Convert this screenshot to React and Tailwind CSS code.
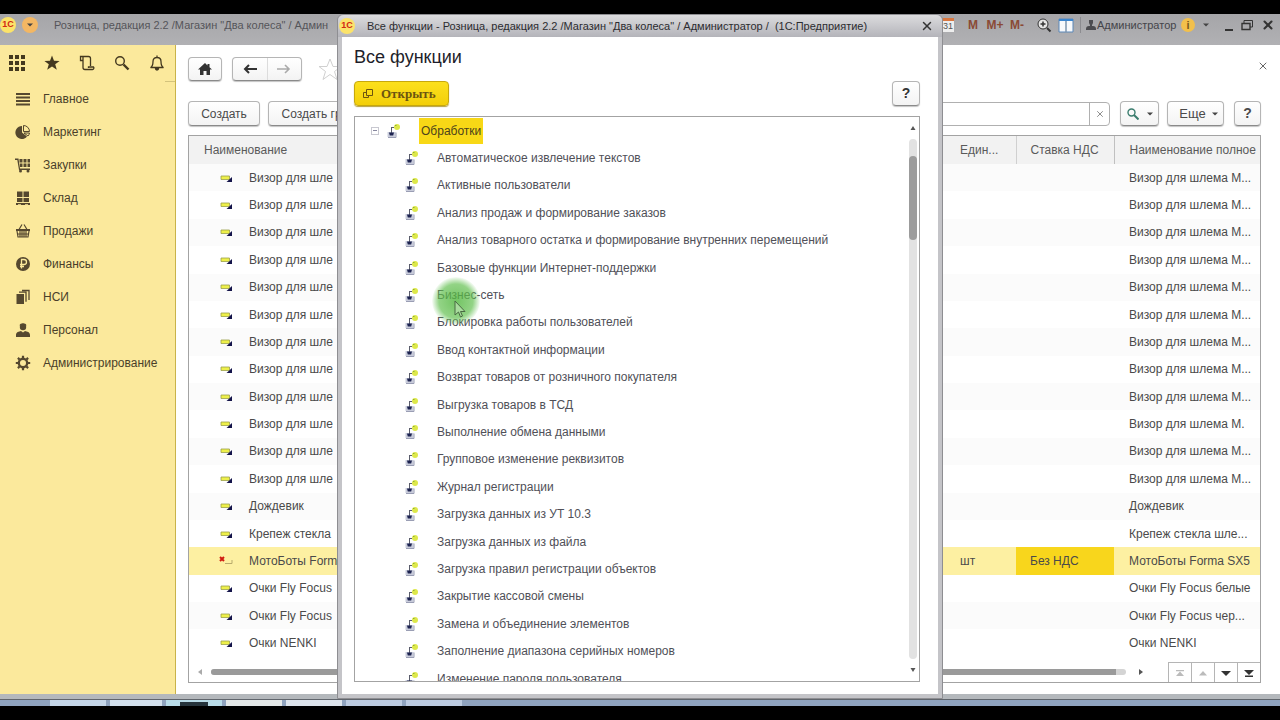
import React, { useState } from 'react';
import { X } from 'lucide-react';

const sections = [
  { id: 'main', label: 'Главное' },
  { id: 'marketing', label: 'Маркетинг' },
  { id: 'purchases', label: 'Закупки' },
  { id: 'stock', label: 'Склад' },
  { id: 'sales', label: 'Продажи' },
  { id: 'finance', label: 'Финансы' },
  { id: 'nsi', label: 'НСИ' },
  { id: 'staff', label: 'Персонал' },
  { id: 'admin', label: 'Администрирование' },
];

const visor = { name: 'Визор для шле', fullName: 'Визор для шлема M...' };
const visorShort = { name: 'Визор для шле', fullName: 'Визор для шлема M.' };

const goods = [
  visor, visor, visor, visor, visor, visor, visor, visor, visor, visorShort, visor, visor,
  { name: 'Дождевик', fullName: 'Дождевик' },
  { name: 'Крепеж стекла', fullName: 'Крепеж стекла шле...' },
  { name: 'МотоБоты Forma SX5', unit: 'шт', vat: 'Без НДС', fullName: 'МотоБоты Forma SX5', marked: true },
  { name: 'Очки Fly Focus', fullName: 'Очки Fly Focus белые' },
  { name: 'Очки Fly Focus', fullName: 'Очки Fly Focus чер...' },
  { name: 'Очки NENKI', fullName: 'Очки NENKI' },
];

const functions = [
  'Автоматическое извлечение текстов',
  'Активные пользователи',
  'Анализ продаж и формирование заказов',
  'Анализ товарного остатка и формирование внутренних перемещений',
  'Базовые функции Интернет-поддержки',
  'Бизнес-сеть',
  'Блокировка работы пользователей',
  'Ввод контактной информации',
  'Возврат товаров от розничного покупателя',
  'Выгрузка товаров в ТСД',
  'Выполнение обмена данными',
  'Групповое изменение реквизитов',
  'Журнал регистрации',
  'Загрузка данных из УТ 10.3',
  'Загрузка данных из файла',
  'Загрузка правил регистрации объектов',
  'Закрытие кассовой смены',
  'Замена и объединение элементов',
  'Заполнение диапазона серийных номеров',
  'Изменение пароля пользователя',
];

const buttonBase =
  'flex items-center justify-center rounded-sm border border-[#b5b5b5] border-b-[#8a8a8a] bg-gradient-to-b from-white to-[#f3f3f3] shadow-[0_1px_1px_#c4c4c4]';

function SectionIcon({ id }) {
  return (
    <svg viewBox="0 0 16 16" className="h-4 w-4 shrink-0" fill="#55482f" aria-hidden="true">
      {id === 'main' && <path d="M1 2h14v2H1zM1 5.500h14v2H1zM1 9h14v2H1zM1 12.500h14v2H1z" />}
      {id === 'marketing' && (
        <>
          <path d="M7 2a6.500 6.500 0 1 0 5 10.500L7 8.500z" />
          <path d="M8.500 1.500v6h6a6 6 0 0 0-6-6zM9 9h5.500a6 6 0 0 1-1.500 3z" fill="none" stroke="#55482f" />
        </>
      )}
      {id === 'purchases' && (
        <>
          <path d="M0 1.500h3.500L5 11.500h10V13H4L2.300 3H0z" />
          <path d="M4.500 2h3v3.500h-3zM8.500 2h3v3.500h-3zM12.500 2H15v3.500h-2.500zM5 6.500h2.500V10H5zM8.500 6.500h3V10h-3zM12.500 6.500H15V10h-2.500z" />
          <circle cx="5.500" cy="14" r="1.500" />
          <circle cx="13" cy="14" r="1.500" />
        </>
      )}
      {id === 'stock' && <path d="M2 1.500h5.500V7H2zM8.500 1.500H14V7H8.500zM2 8h5.500v4H2zM8.500 8H14v4H8.500zM1 13h14v2h-2v-.8h-3V15H6v-.8H3V15H1z" />}
      {id === 'sales' && (
        <>
          <path d="M1 6h14v2H1z" />
          <path d="M4 6.500 7 1.500M12 6.500 9 1.500M2 8l1 6h10l1-6M5 8v6M7 8v6M9 8v6M11 8v6M3 11h10" fill="none" stroke="#55482f" strokeWidth="1.200" />
        </>
      )}
      {id === 'finance' && (
        <>
          <circle cx="8" cy="8" r="7" />
          <path d="M6.500 12.500v-9H9a2.500 2.500 0 0 1 0 5H5M5 10.500h4" fill="none" stroke="#fbe99c" strokeWidth="1.300" />
        </>
      )}
      {id === 'nsi' && (
        <>
          <path d="M1.500 5h7.500v10H1.500z" />
          <path d="M4 3.200h7v9.500M7 1.500h7v9.500" fill="none" stroke="#55482f" strokeWidth="1.300" />
        </>
      )}
      {id === 'staff' && (
        <>
          <circle cx="8" cy="5" r="3.200" />
          <path d="M4.500 3.500C5 .5 11 .5 11.500 3.500zM1 15v-2c0-3 3-3.500 5-4l2 1.500L10 9c2 .5 5 1 5 4v2z" />
        </>
      )}
      {id === 'admin' && (
        <>
          <circle cx="8" cy="8" r="4.200" fill="none" stroke="#55482f" strokeWidth="2.400" />
          <path d="M8 .8V3M8 13v2.200M.8 8H3M13 8h2.200M2.900 2.900l1.600 1.600M11.500 11.500l1.600 1.600M2.900 13.100l1.600-1.600M11.500 4.500l1.600-1.600" stroke="#55482f" strokeWidth="2.200" />
        </>
      )}
    </svg>
  );
}

function Logo() {
  return (
    <span className="flex h-4 w-4 shrink-0 items-center justify-center rounded-full bg-[#fbe36a] text-[9px] font-bold text-[#d22a12]">
      1С
    </span>
  );
}

function Caret({ className = '' }) {
  return (
    <svg viewBox="0 0 6 4" className={`h-1 w-1.5 shrink-0 ${className}`} fill="#444" aria-hidden="true">
      <path d="M0 .5h6L3 3.500z" />
    </svg>
  );
}

function GoodsIcon({ marked }) {
  return (
    <svg viewBox="0 0 14 10" className="block h-[10px] w-[14px]" aria-hidden="true">
      {marked ? (
        <>
          <path d="M6 7.500h7V4" fill="none" stroke="#b8ab6c" />
          <path d="m1 1 4 4M5 1 1 5" stroke="#d01c10" strokeWidth="2" />
        </>
      ) : (
        <>
          <path d="M2 3h8.500v3.500H2z" fill="#eef04a" stroke="#9aa04a" strokeWidth=".8" />
          <path d="M13 4v5H7.500z" fill="#14144a" />
        </>
      )}
    </svg>
  );
}

function ProcessingIcon() {
  return (
    <svg viewBox="0 0 16 16" className="h-4 w-4 shrink-0" aria-hidden="true">
      <path d="M2.500 9h8v5h-8z" fill="#c9ccdb" />
      <path d="M6.500 4v7M6.500 4.500H9" fill="none" stroke="#5a5d6c" />
      <path d="M3 14.500h8V9.500" fill="none" stroke="#9a9eb4" />
      <path d="M4 9.500h5l-.8 3H4.800z" fill="#1d2350" />
      <circle cx="12" cy="4" r="3" fill="#dde84a" />
      <path d="M10 2.500h1.500" stroke="#8fae3a" />
    </svg>
  );
}

function TitleBar() {
  return (
    <header className="flex h-[31px] shrink-0 items-start justify-between bg-gradient-to-b from-[#a5a5a8] to-[#b1b1b4] pt-px text-[11px] text-[#55555a]">
      <div className="flex h-5 items-center">
        <Logo />
        <button type="button" aria-label="Меню" className="ml-1.5 flex h-4 w-4 items-center justify-center rounded-full bg-[#f3b763]">
          <Caret />
        </button>
        <span className="ml-4 whitespace-nowrap">Розница, редакция 2.2 /Магазин "Два колеса" / Админ</span>
      </div>
      <div className="flex h-5 items-center pr-[5px]">
        <span className="mr-2 flex h-3.5 w-3 items-center justify-center border-t-[3px] border-[#d9773f] bg-[#eee] text-[9px] text-[#555]">31</span>
        <button type="button" className="w-[22px] text-[12px] font-bold text-[#8a4a35]">M</button>
        <button type="button" className="w-[22px] text-[12px] font-bold text-[#8a4a35]">M+</button>
        <button type="button" className="w-[22px] text-[12px] font-bold text-[#8a4a35]">M-</button>
        <button type="button" aria-label="Масштаб" className="ml-2">
          <svg viewBox="0 0 16 16" className="h-4 w-4" fill="none" stroke="#333">
            <circle cx="7" cy="7" r="5" fill="#e6e6e6" />
            <path d="M4.500 7h5M7 4.500v5" strokeWidth="1.500" />
            <path d="m11 11 3.500 3.500" strokeWidth="2" />
          </svg>
        </button>
        <button type="button" aria-label="Панели" className="ml-1.5">
          <svg viewBox="0 0 16 16" className="h-4 w-4">
            <path d="M1 2h14v13H1z" fill="#f7f9fb" stroke="#5b87b8" />
            <path d="M1 2h14v2H1z" fill="#3b86cf" />
            <path d="M8 4v11" stroke="#7b93ad" strokeWidth="1.500" />
          </svg>
        </button>
        <span className="ml-1.5 h-4 w-px bg-[#8c8c90]" />
        <svg viewBox="0 0 12 12" className="ml-1 h-3 w-3" fill="#4c4c50" aria-hidden="true">
          <path d="M4 1h4v3L7 6v1h1c2 0 3 1 3 3v1H1v-1c0-2 1-3 3-3h1V6L4 4z" />
        </svg>
        <button type="button" className="w-20 text-left text-[#44444a]">Администратор</button>
        <button type="button" aria-label="Информация" className="ml-1 flex h-3.5 w-3.5 items-center justify-center rounded-full bg-[#f2c04c] text-[11px] font-bold text-[#7a5a1c]">i</button>
        <Caret className="ml-2" />
        <button type="button" aria-label="Свернуть" className="ml-4 flex h-3 w-2 items-end">
          <span className="h-0.5 w-2 bg-[#333]" />
        </button>
        <button type="button" aria-label="Развернуть" className="ml-2">
          <svg viewBox="0 0 12 12" className="h-3 w-3" fill="none" stroke="#333">
            <path d="M3 4V1.500h8.500V8H9" />
            <path d="M1 4.500h8v6H1z" strokeWidth="1.400" />
          </svg>
        </button>
        <button type="button" aria-label="Закрыть" className="ml-2">
          <X className="h-3.5 w-3.5 text-[#333]" strokeWidth={3.500} />
        </button>
      </div>
    </header>
  );
}

function Sidebar() {
  return (
    <aside className="w-[176px] shrink-0 border-r border-[#c9b34a] bg-[#fbe99c] text-[12px] text-[#4a3f2a]">
      <div className="flex h-9 items-center gap-[19px] pl-[9px]">
        <button type="button" aria-label="Меню функций">
          <svg viewBox="0 0 16 16" className="h-4 w-4" fill="#44391f">
            <path d="M0 0h4v4H0zM6 0h4v4H6zM12 0h4v4h-4zM0 6h4v4H0zM6 6h4v4H6zM12 6h4v4h-4zM0 12h4v4H0zM6 12h4v4H6zM12 12h4v4h-4z" />
          </svg>
        </button>
        <button type="button" aria-label="Избранное">
          <svg viewBox="0 0 16 16" className="h-4 w-4" fill="#44391f">
            <path d="m8 .5 2 5.200 5.600.2-4.400 3.400 1.600 5.400L8 11.600l-4.800 3.100 1.600-5.400L.4 5.900 6 5.700z" />
          </svg>
        </button>
        <button type="button" aria-label="История">
          <svg viewBox="0 0 16 16" className="h-4 w-4" fill="none" stroke="#44391f" strokeWidth="1.300">
            <path d="M4 5.500H1.500V1.500h8a2 2 0 0 1 2 2V11M4 1.500v11a2 2 0 0 0 2 2h7.500a1.500 1.500 0 0 0 1-2.500H9.500v1" />
          </svg>
        </button>
        <button type="button" aria-label="Поиск">
          <svg viewBox="0 0 16 16" className="h-4 w-4" fill="none" stroke="#44391f">
            <circle cx="6" cy="6" r="4.300" strokeWidth="1.400" />
            <path d="m9.500 9.500 5 5" strokeWidth="2.400" />
          </svg>
        </button>
        <button type="button" aria-label="Оповещения">
          <svg viewBox="0 0 16 16" className="h-4 w-4" fill="none" stroke="#44391f" strokeWidth="1.300">
            <path d="M1.500 12.500c2-1 2.500-3 2.500-6 0-2.500 1.500-4 4-4s4 1.500 4 4c0 3 .5 5 2.500 6zM8 .5v2" />
            <path d="M6.500 13.500a1.500 1.500 0 0 0 3 0z" fill="#44391f" />
          </svg>
        </button>
      </div>
      <div className="ml-auto h-px w-2.5 bg-[#d3c37c]" />
      <nav>
        {sections.map((section) => (
          <a key={section.id} href={`#${section.id}`} className="flex h-[33px] items-center gap-3 pl-[15px]">
            <SectionIcon id={section.id} />
            {section.label}
          </a>
        ))}
      </nav>
    </aside>
  );
}

function GoodsTable() {
  return (
    <div className="flex min-h-0 flex-1 flex-col border border-[#a3a3a3]">
      <div className="min-h-0 flex-1">
        <table className="h-full w-full table-fixed border-collapse text-left">
          <thead>
            <tr className="h-7 bg-[#f2f2f2] text-[#5a5a5a]">
              <th className="pl-[15px] font-normal">Наименование</th>
              <th className="w-[72px] border-r border-[#d0d0d0] pl-4 font-normal">Един...</th>
              <th className="w-[98px] border-r border-[#c0c0c0] pl-3.5 font-normal">Ставка НДС</th>
              <th className="w-[146px] whitespace-nowrap pl-[15px] font-normal">Наименование полное</th>
            </tr>
          </thead>
          <tbody>
            {goods.map((item, index) => (
              <tr key={index} className={item.marked ? 'bg-[#fdf0a2]' : 'odd:bg-[#fbfbfb]'}>
                <td className="p-0">
                  <div className="flex items-center pl-[30px]">
                    <GoodsIcon marked={item.marked} />
                    <span className="ml-4 whitespace-nowrap">{item.name}</span>
                  </div>
                </td>
                <td className="p-0 pl-4">{item.unit}</td>
                <td className={item.vat ? 'bg-[#f8d61c] p-0 pl-3.5' : 'p-0 pl-3.5'}>{item.vat}</td>
                <td className="whitespace-nowrap p-0 pl-[15px]">{item.fullName}</td>
              </tr>
            ))}
          </tbody>
        </table>
      </div>
      <div className="flex h-[25px] shrink-0 items-end">
        <div className="flex h-5 flex-1 items-center">
          <svg viewBox="0 0 6 8" className="ml-2 h-2 w-1.5" fill="#aaa" aria-hidden="true"><path d="M5 1v6L1 4z" /></svg>
          <div className="ml-2 mr-3 flex h-1.5 flex-1 rounded-full bg-[#d4d4d4] pr-2.5">
            <div className="flex-1 rounded-l-full bg-[#9a9a9a]" />
          </div>
          <svg viewBox="0 0 6 8" className="mr-6 h-2 w-1.5" fill="#555" aria-hidden="true"><path d="M1 1v6l4-3z" /></svg>
        </div>
        <div className="flex h-5 border-t border-[#b5b5b5]">
          {['first', 'up', 'down', 'last'].map((kind) => (
            <button key={kind} type="button" aria-label={kind} className="flex w-[23px] items-center justify-center border-l border-[#b5b5b5]">
              <svg viewBox="0 0 10 10" className="h-2.5 w-2.5" fill={kind === 'down' || kind === 'last' ? '#333' : '#bbb'}>
                {kind === 'first' && <path d="M1 2h8v1.200H1zM5 3.500 9 8H1z" />}
                {kind === 'up' && <path d="m5 3 4 4.500H1z" />}
                {kind === 'down' && <path d="M0 3h10L5 8z" />}
                {kind === 'last' && <path d="M0 2h10L5 7zM1 7.500h8V9H1z" />}
              </svg>
            </button>
          ))}
        </div>
      </div>
    </div>
  );
}

function GoodsPage() {
  const [query, setQuery] = useState('');

  return (
    <main className="flex min-w-0 flex-1 flex-col bg-white pb-[11px] pl-3 pr-[19px] text-[12px] text-[#4a4a4a]">
      <div className="mt-3 flex h-6 items-center">
        <button type="button" aria-label="Начальная страница" className={`${buttonBase} h-6 w-[34px]`}>
          <svg viewBox="0 0 14 12" className="h-3 w-3.5" fill="#333">
            <path d="M7 0 0 6.500h2V12h3.500V8h3v4H12V6.500h2l-2.500-2.300V1h-2v1.400z" />
          </svg>
        </button>
        <div className={`${buttonBase} ml-2.5 h-6 w-[70px]`}>
          <button type="button" aria-label="Назад" className="flex h-full flex-1 items-center justify-center border-r border-[#dcdcdc]">
            <svg viewBox="0 0 14 10" className="h-2.5 w-3.5" fill="none" stroke="#333" strokeWidth="2"><path d="M14 5H2M6 1 2 5l4 4" /></svg>
          </button>
          <button type="button" aria-label="Вперед" className="flex h-full flex-1 items-center justify-center">
            <svg viewBox="0 0 14 10" className="h-2.5 w-3.5" fill="none" stroke="#aaa" strokeWidth="1.600"><path d="M0 5h12M8 1l4 4-4 4" /></svg>
          </button>
        </div>
        <svg viewBox="0 0 24 24" className="ml-4 h-6 w-6" fill="none" stroke="#d0d0d0" aria-hidden="true">
          <path d="m12 2 3 7.500h8l-6.500 5 2.500 8-7-5-7 5 2.500-8L1 9.500h8z" />
        </svg>
        <button type="button" aria-label="Закрыть" className="-mr-2 mb-1.5 ml-auto">
          <X className="h-3 w-3 text-[#666]" />
        </button>
      </div>
      <div className="mb-[9px] mt-5 flex h-[25px] items-center">
        <button type="button" className={`${buttonBase} h-[25px] w-[72px]`}>Создать</button>
        <button type="button" className={`${buttonBase} ml-2 h-[25px] w-28`}>Создать группу</button>
        <div className="ml-auto flex h-6 w-[260px] rounded-sm border border-[#b0b0b0]">
          <input aria-label="Поиск" value={query} onChange={(e) => setQuery(e.target.value)} className="min-w-0 flex-1 px-2 outline-none" />
          <button type="button" aria-label="Очистить" onClick={() => setQuery('')} className="flex w-5 items-center justify-center border-l border-[#b0b0b0]">
            <X className="h-2.5 w-2.5 text-[#777]" />
          </button>
        </div>
        <button type="button" aria-label="Найти" className={`${buttonBase} ml-2.5 h-[25px] w-[39px] gap-2`}>
          <svg viewBox="0 0 12 12" className="h-3 w-3" fill="none" stroke="#3b7d6e">
            <circle cx="4.500" cy="4.500" r="3.500" strokeWidth="1.400" />
            <path d="m7 7 4.500 4.500" strokeWidth="2" />
          </svg>
          <Caret />
        </button>
        <button type="button" className={`${buttonBase} ml-2 h-[25px] w-[57px] gap-1.5 pl-1.5 text-[13px]`}>
          Еще
          <Caret />
        </button>
        <button type="button" aria-label="Справка" className={`${buttonBase} ml-2.5 h-[25px] w-[27px] text-[14px] font-bold`}>?</button>
      </div>
      <GoodsTable />
    </main>
  );
}

function FunctionsDialog() {
  return (
    <div role="dialog" aria-label="Все функции" className="flex w-[606px] flex-col rounded-t-md border border-[#8e8e92] bg-[#c4c4c8] px-1 pb-1">
      <div className="-mx-1 flex h-[22px] shrink-0 items-center rounded-t-md bg-gradient-to-b from-[#dcdcde] to-[#b4b4ba] pl-px pr-2 text-[11px] text-[#2c2c30]">
        <Logo />
        <span className="ml-3 whitespace-pre">Все функции - Розница, редакция 2.2 /Магазин "Два колеса" / Администратор /  (1С:Предприятие)</span>
        <button type="button" aria-label="Закрыть" className="ml-auto">
          <X className="h-3.5 w-3.5 text-[#333]" strokeWidth={2.500} />
        </button>
      </div>
      <div className="relative flex min-h-0 flex-1 flex-col bg-white pb-3 pl-3 pr-[18px]">
        <h1 className="mt-2 text-[18px] leading-6 text-[#1e1e2a]">Все функции</h1>
        <div className="mb-2.5 mt-3 flex h-[25px] items-center justify-between">
          <button type="button" className="flex h-[25px] w-[95px] items-center rounded-sm border border-[#c7a80c] bg-gradient-to-b from-[#fce01c] to-[#f3cf08] pl-2 font-['Liberation_Serif',serif] text-[13px] font-bold text-[#6b5410] shadow-[0_1px_1px_#b5a040]">
            <svg viewBox="0 0 10 10" className="mr-2 h-2.5 w-2.5" fill="none" stroke="#6b5410" aria-hidden="true">
              <path d="M3.500.500h6v6h-6z" />
              <path d="M3 3.500H.500v5h5V7" />
            </svg>
            Открыть
          </button>
          <button type="button" aria-label="Справка" className={`${buttonBase} h-[25px] w-7 text-[14px] font-bold text-[#333]`}>?</button>
        </div>
        <div className="flex min-h-0 flex-1 border border-[#a3a3a3] text-[12px] text-[#505058]">
          <div className="min-w-0 flex-1 overflow-hidden">
            <ul className="flex h-[102%] flex-col leading-4">
              <li className="flex flex-1 items-center pl-4">
                <button type="button" aria-label="Свернуть группу" className="flex h-2 w-2 items-center justify-center border border-[#c8c8d0]">
                  <span className="h-px w-1 bg-[#8888a0]" />
                </button>
                <span className="ml-1.5"><ProcessingIcon /></span>
                <span className="ml-[18px] flex h-[26px] items-center bg-[#f8d816] px-0.5 text-[#4d431c]">Обработки</span>
              </li>
              {functions.map((name) => (
                <li key={name} className="flex flex-1 items-center gap-[18px] pl-12">
                  <ProcessingIcon />
                  <span className="whitespace-nowrap">{name}</span>
                </li>
              ))}
            </ul>
          </div>
          <div className="flex w-3 shrink-0 flex-col items-center py-2">
            <svg viewBox="0 0 6 6" className="h-1.5 w-1.5" fill="#555" aria-hidden="true"><path d="m3 1 2.500 4h-5z" /></svg>
            <div className="my-2 w-2 flex-1 rounded-full bg-[#e2e2e2] pt-[17px]">
              <div className="h-[84px] rounded-sm bg-[#9c9c9c]" />
            </div>
            <svg viewBox="0 0 6 6" className="h-1.5 w-1.5" fill="#555" aria-hidden="true"><path d="M3 5 .5 1h5z" /></svg>
          </div>
        </div>
        {/* click highlight and pointer */}
        <div className="pointer-events-none absolute left-[90px] top-[240px] flex h-12 w-12 items-center justify-center rounded-full bg-[radial-gradient(circle,#4fb53ccc_0%,#62c04fb0_50%,#7ccb6c00_72%)]">
          <svg viewBox="0 0 12 18" className="ml-2 mt-4 h-[18px] w-3" fill="#a9dc9d" stroke="#4a6a44" aria-hidden="true">
            <path d="M1 1v14l3.500-3 2 5 2-1-2-4.500H11z" />
          </svg>
        </div>
      </div>
    </div>
  );
}

export default function App() {
  return (
    <div className="flex h-screen flex-col bg-black py-3.5 font-['Liberation_Sans',Arial,sans-serif]">
      <div className="relative flex min-h-0 flex-1 flex-col overflow-hidden">
        <TitleBar />
        <div className="flex min-h-0 flex-1">
          <Sidebar />
          <GoodsPage />
        </div>
        <div className="h-1.5 shrink-0 border-b border-[#60656c] bg-[#b4b8bc]" />
        <div className="flex h-1.5 shrink-0 gap-1 bg-[#8fa3be] pl-[50px]">
          <span className="w-14 bg-[#c5d6e8]" />
          <span className="w-[52px] bg-[#d3e0ec]" />
          <span className="flex w-14 justify-center bg-[#b9dce8]"><span className="mt-0.5 w-7 bg-[#26343c]" /></span>
          <span className="w-14 bg-[#e4e8e8]" />
          <span className="w-14 bg-[#dde4ec]" />
          <span className="w-14 bg-[#bccbe0]" />
          <span className="w-14 bg-[#bccbe0]" />
        </div>
        <div className="absolute inset-x-0 bottom-[7px] top-0 flex justify-center">
          <FunctionsDialog />
        </div>
      </div>
    </div>
  );
}
